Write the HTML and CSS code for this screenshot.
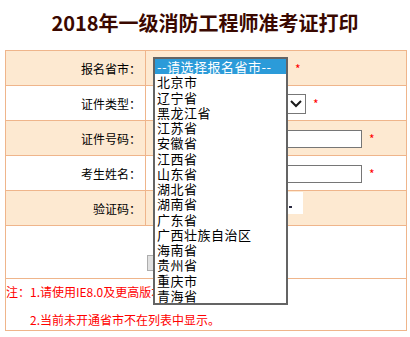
FILE: index.html
```html
<!DOCTYPE html>
<html lang="zh-CN">
<head>
<meta charset="utf-8">
<title>2018年一级消防工程师准考证打印</title>
<link rel="stylesheet" href="styles.css">
</head>
<body>
<div class="title">2018年一级消防工程师准考证打印</div>
<table class="form">
  <colgroup><col class="c1"><col class="c2"></colgroup>
  <tr class="alt">
    <td class="lbl">报名省市：</td>
    <td class="val"><span class="sel sel1"></span><span class="req">*</span></td>
  </tr>
  <tr>
    <td class="lbl">证件类型：</td>
    <td class="val"><span class="sel sel2"><svg class="chev" width="12" height="8" viewBox="0 0 12 8"><polyline points="1,1 6,6 11,1" fill="none" stroke="#1a1a1a" stroke-width="2"/></svg></span><span class="req">*</span></td>
  </tr>
  <tr class="alt">
    <td class="lbl">证件号码：</td>
    <td class="val"><span class="inp"></span><span class="req">*</span></td>
  </tr>
  <tr>
    <td class="lbl">考生姓名：</td>
    <td class="val"><span class="inp"></span><span class="req">*</span></td>
  </tr>
  <tr class="alt">
    <td class="lbl">验证码：</td>
    <td class="val val-code"><span class="inp inp-code"></span><span class="captcha"><span class="dot"></span></span></td>
  </tr>
  <tr>
    <td class="btn-cell" colspan="2"><span class="btn">打印准考证</span></td>
  </tr>
  <tr>
    <td class="notes" colspan="2">
      <div class="note-line"><span class="note-head">注：</span>1.请使用IE8.0及更高版本浏览器。</div>
      <div class="note-line note-indent">2.当前未开通省市不在列表中显示。</div>
    </td>
  </tr>
</table>
<div class="popup">
  <div class="opt opt-sel">--请选择报名省市--</div>
  <div class="opt">北京市</div>
  <div class="opt">辽宁省</div>
  <div class="opt">黑龙江省</div>
  <div class="opt">江苏省</div>
  <div class="opt">安徽省</div>
  <div class="opt">江西省</div>
  <div class="opt">山东省</div>
  <div class="opt">湖北省</div>
  <div class="opt">湖南省</div>
  <div class="opt">广东省</div>
  <div class="opt">广西壮族自治区</div>
  <div class="opt">海南省</div>
  <div class="opt">贵州省</div>
  <div class="opt">重庆市</div>
  <div class="opt">青海省</div>
</div>
</body>
</html>
```
FILE: styles.css
```css
body {
  margin: 0;
  width: 410px;
  height: 337px;
  overflow: hidden;
  position: relative;
  font-family: "Noto Sans CJK SC", "Liberation Sans", sans-serif;
  font-size: 13px;
  color: #000;
  background: #fff;
}

.title {
  height: 50px;
  line-height: 46px;
  text-align: center;
  font-size: 20px;
  font-weight: bold;
  color: #3a0800;
}

.form {
  margin-left: 5px;
  width: 402px;
  border-collapse: collapse;
  table-layout: fixed;
}

.c1 { width: 140px; }

.form td {
  border: 1px solid #efb58b;
  padding: 0;
  height: 34px;
  background: #fff;
}

.form tr.alt td { background: #fde9d1; }

.lbl {
  text-align: right;
  font-size: 12px;
  padding-right: 4px !important;
  white-space: nowrap;
}

.val {
  padding-left: 7px !important;
  white-space: nowrap;
}

.val-code {
  vertical-align: top;
  padding-top: 1px !important;
  box-sizing: border-box;
}

.sel, .inp, .captcha {
  display: inline-block;
  vertical-align: middle;
  box-sizing: border-box;
  background: #fff;
}

.sel {
  border: 1px solid #777;
  height: 20px;
}

.sel1 { width: 135px; }

.sel2 {
  width: 153px;
  display: inline-flex;
  justify-content: flex-end;
  align-items: center;
  padding-right: 3px;
}

.inp {
  width: 209px;
  height: 18px;
  border: 1px solid #767676;
}

.val-code .inp,
.val-code .captcha { vertical-align: top; }

.inp-code { width: 72px; margin-top: 2px; }

.captcha {
  width: 71px;
  height: 22px;
  margin-left: 7px;
  position: relative;
}

.dot {
  position: absolute;
  left: 57px;
  top: 14px;
  width: 3px;
  height: 2px;
  background: #2a2a40;
}

.req {
  display: inline-block;
  vertical-align: middle;
  margin-left: 7px;
  margin-bottom: 4px;
  color: #f00;
  font-size: 12px;
  line-height: 12px;
  height: 8px;
}

.btn-cell {
  height: 53px !important;
  vertical-align: top;
  text-align: center;
  padding-top: 29px !important;
  box-sizing: border-box;
}

.btn {
  display: inline-block;
  box-sizing: border-box;
  width: 118px;
  height: 16px;
  line-height: 14px;
  font-size: 12px;
  border: 1px solid #adadad;
  background: #e1e1e1;
  vertical-align: top;
}

.notes {
  height: 52px !important;
  vertical-align: top;
  color: #f00;
  font-size: 12px;
  padding-top: 5px !important;
  box-sizing: border-box;
}

.note-line {
  line-height: 16px;
  height: 16px;
  white-space: nowrap;
}

.note-indent {
  margin-top: 12px;
  padding-left: 24px;
}

.popup {
  position: absolute;
  left: 153px;
  top: 57px;
  width: 135px;
  box-sizing: border-box;
  border: 2px solid #646464;
  background: #fff;
}

.opt {
  height: 15.25px;
  line-height: 15.25px;
  font-size: 13px;
  padding-left: 2px;
  white-space: nowrap;
  letter-spacing: 0.5px;
}

.opt-sel {
  background: #2b9bd9;
  color: #fff;
}
```
